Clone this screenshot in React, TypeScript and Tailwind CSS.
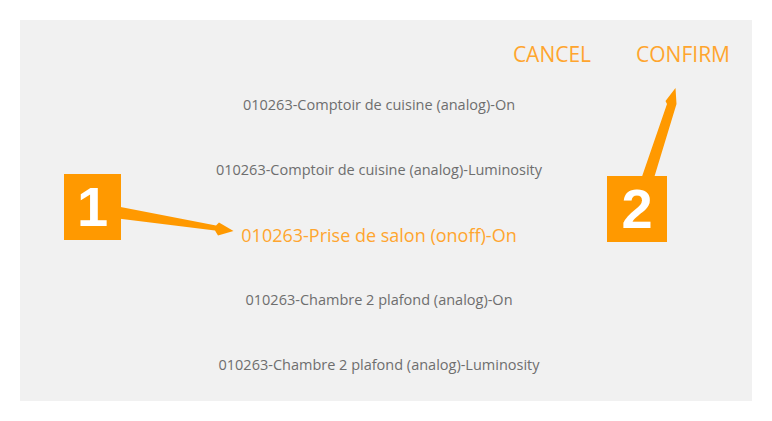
const rows = [
  { label: '010263-Comptoir de cuisine (analog)-On', active: false },
  { label: '010263-Comptoir de cuisine (analog)-Luminosity', active: false },
  { label: '010263-Prise de salon (onoff)-On', active: true },
  { label: '010263-Chambre 2 plafond (analog)-On', active: false },
  { label: '010263-Chambre 2 plafond (analog)-Luminosity', active: false },
];

const Badge = ({ n, className }: { n: string; className: string }) => (
  <div
    className={`absolute flex items-center justify-center bg-[#ff9900] text-white font-bold text-[56px] leading-none ${className}`}
    style={{ fontFamily: '"Liberation Sans", Arial, sans-serif' }}
  >
    {n}
  </div>
);

export default function App() {
  return (
    <div className="relative w-full h-[421px] bg-white p-5" style={{ fontFamily: '"Open Sans", sans-serif' }}>
      <div className="flex flex-col h-[381px] bg-[#f1f1f1]">
        <div className="flex justify-end gap-[45px] pt-5 pr-[22px] text-[21px] leading-7 text-[#ffa52e]">
          <button>CANCEL</button>
          <button>CONFIRM</button>
        </div>
        <ul className="mt-[4.5px] pr-[14px] flex flex-col">
          {rows.map((r) => (
            <li
              key={r.label}
              className={`h-[65px] flex items-center justify-center ${
                r.active ? 'text-[18px] text-[#ffa52e]' : 'text-[14.5px] text-[#6e6e6e]'
              }`}
            >
              {r.label}
            </li>
          ))}
        </ul>
      </div>

      {/* annotations */}
      <svg className="absolute inset-0 pointer-events-none" width="772" height="421" viewBox="0 0 772 421">
        <polygon
          fill="#ff9900"
          points="118,206.5 216,225.5 219,222.5 233.5,231 218,235.5 215,230.5 118,218.5"
        />
        <polygon
          fill="#ff9900"
          points="641.5,178 667,104 665.5,101 675.5,88 676.5,104 654,178"
        />
      </svg>
      <Badge n="1" className="left-[64px] top-[174px] w-[57px] h-[66px]" />
      <Badge n="2" className="left-[607px] top-[176px] w-[60px] h-[66px]" />
    </div>
  );
}
